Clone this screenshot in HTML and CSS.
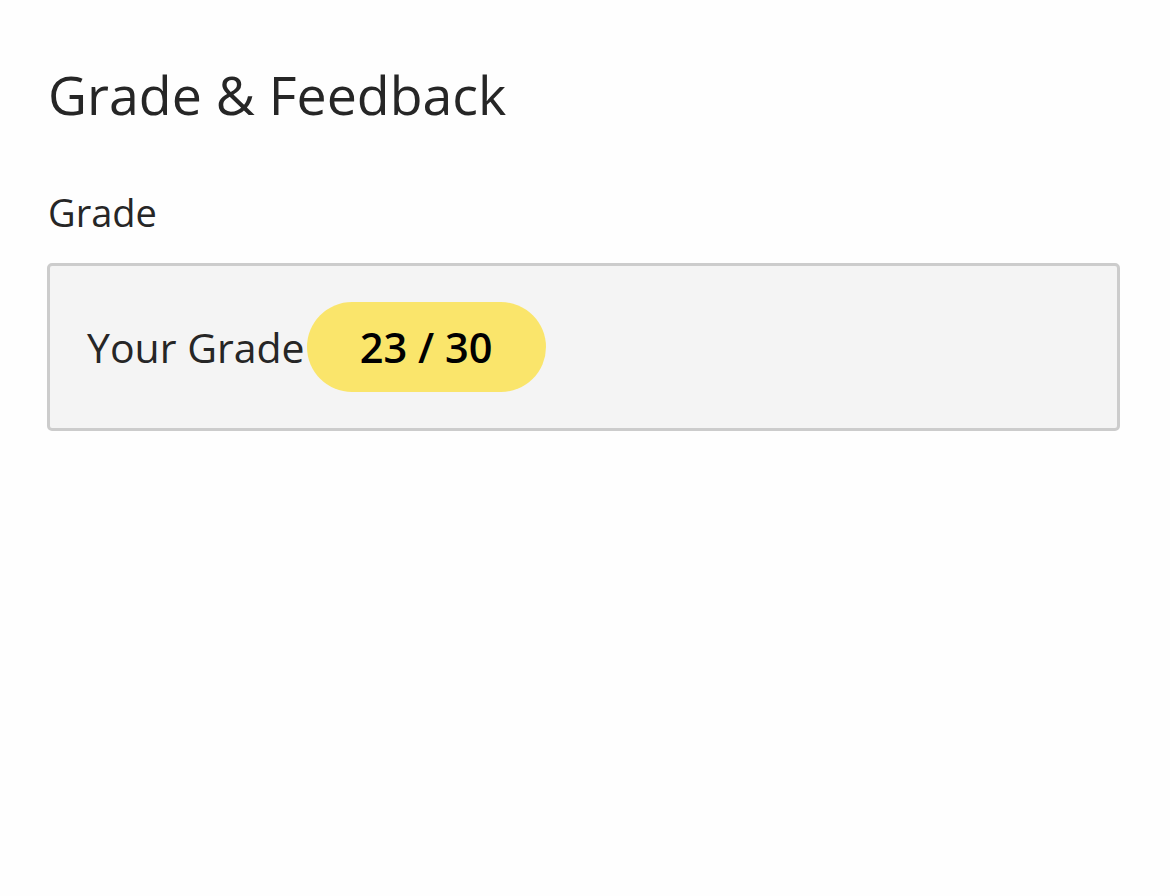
FILE: index.html
```html
<!DOCTYPE html>
<html>
<head>
<meta charset="utf-8">
<link rel="stylesheet" href="styles.css">
</head>
<body>
<div class="page">
  <h1 class="title">Grade &amp; Feedback</h1>
  <div class="label">Grade</div>
  <div class="grade-box">
    <span class="grade-text">Your Grade</span>
    <span class="badge">23 / 30</span>
  </div>
</div>
</body>
</html>
```

FILE: styles.css
```css
html, body {
  margin: 0;
  padding: 0;
  background: #fefefe;
}
body {
  font-family: "Open Sans", sans-serif;
  color: #262626;
}
.page {
  padding: 61px 50px 0 47px;
}
.title {
  margin: 0 0 0 1px;
  font-weight: 400;
  font-size: 53.7px;
  line-height: 68px;
}
.label {
  margin: 59px 0 0 1px;
  font-size: 38px;
  line-height: 48px;
}
.grade-box {
  margin-top: 27px;
  box-sizing: border-box;
  height: 168px;
  border: 3px solid #cccccc;
  border-radius: 5px;
  background: #f4f4f4;
  display: flex;
  align-items: center;
  padding-left: 37px;
}
.grade-text {
  font-size: 41px;
}
.badge {
  margin-left: 2px;
  width: 239px;
  height: 90px;
  border-radius: 45px;
  background: #fae56b;
  color: #000;
  font-weight: 600;
  font-size: 41.5px;
  display: flex;
  align-items: center;
  justify-content: center;
}
```
